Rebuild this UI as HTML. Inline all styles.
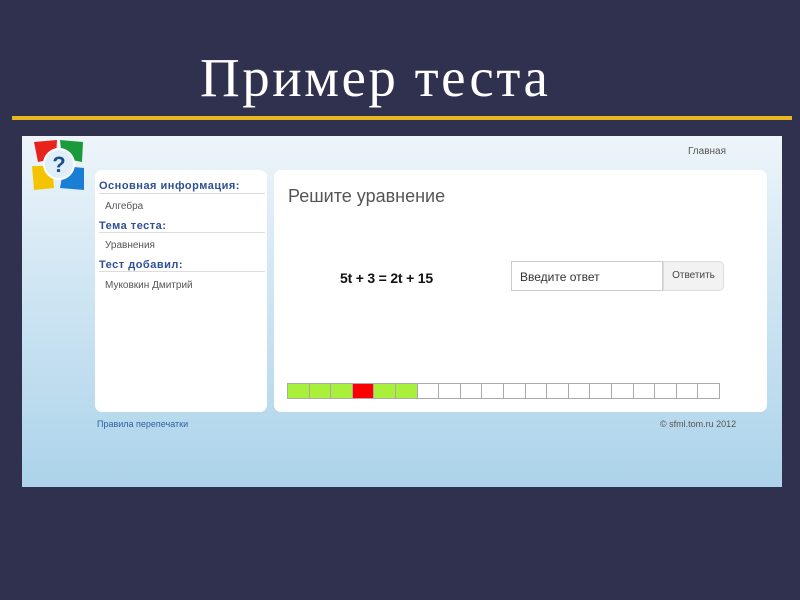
<!DOCTYPE html>
<html><head><meta charset="utf-8"><style>
body{margin:0;width:800px;height:600px;background:#30304f;position:relative;overflow:hidden;font-family:"Liberation Sans",sans-serif}
.t{position:absolute;left:200px;top:46px;font:55px "Liberation Serif",serif;color:#fff;letter-spacing:2.5px;white-space:nowrap}
.line{position:absolute;left:12px;top:116px;width:780px;height:4px;background:#e8b820}
.shot{position:absolute;left:22px;top:136px;width:760px;height:351px;background:linear-gradient(#eef5fa,#d8eaf5 30%,#acd3ea)}
.p{position:absolute;background:#fff;border-radius:7px}
.h{color:#2f4f96;font-weight:bold;font-size:11px;letter-spacing:.5px;position:absolute;left:4px}
.v{color:#555;font-size:10px;position:absolute;left:10px}
.hr{position:absolute;left:4px;right:2px;height:1px;background:#ddd}
.bar{position:absolute;left:287px;top:383px;display:flex}
.bar div{width:20.6px;height:14px;border:1px solid #aaa;margin-right:-1px;background:#fff}
</style></head><body>
<div class="t">Пример теста</div>
<div class="line"></div>
<div class="shot">
<svg style="position:absolute;left:10px;top:4px" width="54" height="52" viewBox="0 0 54 52">
<polygon points="2,2 25,0 24,18 6,22" fill="#e8231b"/>
<polygon points="28,0 51,2 50,22 30,18" fill="#1a9a3a"/>
<polygon points="0,26 20,26 22,48 2,50" fill="#f5c400"/>
<polygon points="32,26 52,28 52,50 28,48" fill="#1a7fd4"/>
<circle cx="27" cy="24" r="15" fill="#dfeef8" stroke="#fff" stroke-width="2"/>
<text x="27" y="32" text-anchor="middle" font-size="22" font-weight="bold" font-family="Liberation Sans" fill="#1d4f8a">?</text>
</svg>
<div style="position:absolute;right:56px;top:10px;font-size:10px;color:#555">Главная</div>
</div>
<div class="p" style="left:95px;top:170px;width:172px;height:242px">
<div class="h" style="top:10px">Основная информация:</div><div class="hr" style="top:23px"></div>
<div class="v" style="top:31px">Алгебра</div>
<div class="h" style="top:50px">Тема теста:</div><div class="hr" style="top:62px"></div>
<div class="v" style="top:70px">Уравнения</div>
<div class="h" style="top:89px">Тест добавил:</div><div class="hr" style="top:101px"></div>
<div class="v" style="top:110px">Муковкин Дмитрий</div>
</div>
<div class="p" style="left:274px;top:170px;width:493px;height:242px">
<div style="position:absolute;left:14px;top:16px;font-size:18px;color:#555">Решите уравнение</div>
<div style="position:absolute;left:66px;top:100px;font-size:14px;color:#111;font-weight:bold;letter-spacing:-.2px">5t + 3 = 2t + 15</div>
<div style="position:absolute;left:237px;top:91px;width:152px;height:30px;border:1px solid #ccc;box-sizing:border-box;font-size:12px;color:#333;padding:8px 8px">Введите ответ</div>
<div style="position:absolute;left:389px;top:91px;width:61px;height:30px;border:1px solid #ddd;box-sizing:border-box;background:#f2f2f2;border-radius:0 5px 5px 0;font-size:10px;color:#444;text-align:center;line-height:28px">Ответить</div>
</div>
<div class="bar">
<div style="background:#a8f03a"></div><div style="background:#a8f03a"></div><div style="background:#a8f03a"></div><div style="background:#f00"></div><div style="background:#a8f03a"></div><div style="background:#a8f03a"></div>
<div></div><div></div><div></div><div></div><div></div><div></div><div></div><div></div><div></div><div></div><div></div><div></div><div></div><div></div>
</div>
<div style="position:absolute;left:97px;top:419px;font-size:9px;color:#2f5f9f">Правила перепечатки</div>
<div style="position:absolute;left:660px;top:419px;font-size:9px;color:#555">© sfml.tom.ru 2012</div>
</body></html>
